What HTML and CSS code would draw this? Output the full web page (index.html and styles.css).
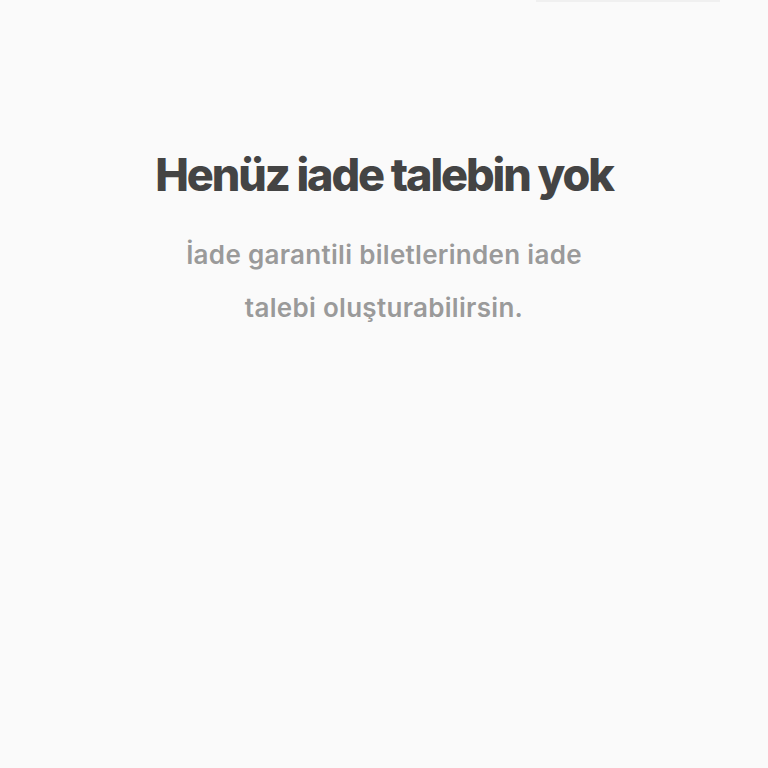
FILE: index.html
```html
<!DOCTYPE html>
<html lang="tr">
<head>
<meta charset="utf-8">
<link rel="stylesheet" href="styles.css">
</head>
<body>
<div class="topbar"></div>
<main class="empty">
  <h1 class="title">Henüz iade talebin yok</h1>
  <p class="subtitle">İade garantili biletlerinden iade<br>talebi oluşturabilirsin.</p>
</main>
</body>
</html>
```
FILE: styles.css
```css
html, body {
  margin: 0;
  padding: 0;
  background: #fafafa;
  width: 768px;
  height: 768px;
  overflow: hidden;
  font-family: Inter, "Noto Sans", sans-serif;
}
.topbar {
  margin-left: 536px;
  width: 184px;
  height: 2px;
  background: #f0f0f0;
}
.empty {
  display: flex;
  flex-direction: column;
  align-items: center;
  padding-top: 143px;
}
.title {
  margin: 0;
  font-size: 45px;
  font-weight: 800;
  letter-spacing: -2.1px;
  color: #444444;
  line-height: 60px;
}
.subtitle {
  margin: 23px 0 0;
  text-align: center;
  font-size: 26px;
  font-weight: 600;
  letter-spacing: 0.3px;
  color: #9a9a9a;
  line-height: 53px;
}
```
